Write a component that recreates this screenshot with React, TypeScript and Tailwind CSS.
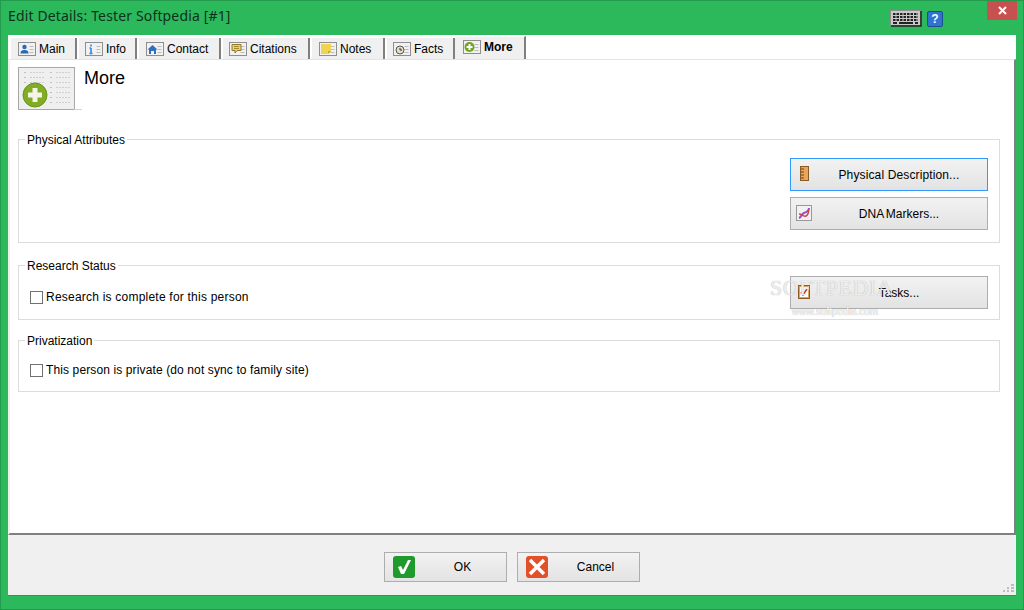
import React from 'react';

function TabGlyph({ children }: { children: React.ReactNode }) {
    return (
        <svg width="18" height="14" viewBox="0 0 18 14" className="shrink-0">
            <rect x="0.5" y="0.5" width="17" height="13" fill="#f1f1f1" stroke="#8f8f8f" />
            <path d="M11.5 4.5h4M11.5 7.5h4M11.5 10.5h4" stroke="#bcbcbc" />
            {children}
        </svg>
    )
}

function Tab({ label, icon, width, active = false }: { label: string, icon: React.ReactNode, width: string, active?: boolean }) {
    if (active) {
        return (
            <div className={'flex flex-row items-center h-[23px] bg-[#f0f0f0] border-t border-[#ffffff] border-r-2 border-r-[#7f7f7f] font-bold text-[#000000] pb-[3px] ' + width}>
                {icon}
                <span className="ml-[3px]">{label}</span>
            </div>
        )
    }
    return (
        <div className={'flex flex-row items-center h-[21px] bg-[#f0f0f0] border-r-2 border-r-[#7f7f7f] ' + width}>
            {icon}
            <span className="ml-[3px]">{label}</span>
        </div>
    )
}

function Group({ title, className, children }: { title: string, className: string, children: React.ReactNode }) {
    return (
        <fieldset className={'border border-[#dcdcdc] pl-[11px] pr-[11px] ' + className}>
            <legend className="-ml-[5px] px-[2px] pt-[2px] text-[12px] leading-[14px]">{title}</legend>
            {children}
        </fieldset>
    )
}

function WideButton({ label, icon, focused = false, labelClass = '' }: { label: string, icon: React.ReactNode, focused?: boolean, labelClass?: string }) {
    return (
        <div className={'relative flex items-center justify-center w-[198px] h-[33px] pl-[20px] border bg-gradient-to-b from-[#f2f2f2] to-[#e3e3e3] ' + (focused ? 'border-[#3399ff]' : 'border-[#adadad]')}>
            <span className="absolute left-[4px] top-[7px] flex w-[18px] justify-center">{icon}</span>
            <span className={labelClass}>{label}</span>
        </div>
    )
}

function CheckRow({ label, labelClass }: { label: string, labelClass: string }) {
    return (
        <div className="flex flex-row items-center">
            <span className="w-[13px] h-[13px] border border-[#707070] bg-white" />
            <span className={'ml-[3px] ' + labelClass}>{label}</span>
        </div>
    )
}

function FooterButton({ label, icon }: { label: string, icon: React.ReactNode }) {
    return (
        <div className="relative flex items-center justify-center w-[123px] h-[30px] pl-[34px] border border-[#adadad] bg-gradient-to-b from-[#f2f2f2] to-[#e3e3e3]">
            <span className="absolute left-[7px] top-[2px]">{icon}</span>
            <span className="text-[12px]">{label}</span>
        </div>
    )
}

export default function App() {
    return (
        <div className="relative flex flex-col w-[1024px] h-[610px] overflow-hidden bg-[#2bb95c] border border-[#239a4c] font-['Liberation_Sans',sans-serif] text-[12px] text-black">
            {/* title bar */}
            <div className="flex flex-row h-[34px] shrink-0">
                <div className="pl-[7px] pt-[6px] font-['Noto_Sans',sans-serif] text-[14px] leading-[18px] tracking-[0.15px] text-[#10301c]">Edit Details: Tester Softpedia [#1]</div>
                <div className="flex flex-row ml-auto">
                    <svg width="32" height="17" viewBox="0 0 32 17" className="mt-[9px]">
                        <rect x="0.5" y="0.5" width="30" height="15" fill="#c9c9c9" stroke="#8f8f8f" />
                        <path d="M31 1v15H1" fill="none" stroke="#222" strokeWidth="1.5" />
                        <path d="M3 4h25M3 7h25M3 10h25" stroke="#222" strokeWidth="2" strokeDasharray="2.5 1" />
                        <path d="M3 13h4M9 13h14M25 13h3" stroke="#222" strokeWidth="2" />
                    </svg>
                    <div className="flex items-center justify-center w-[16px] h-[16px] mt-[10px] ml-[5px] rounded-[2px] bg-[#2f74d0] border border-[#1c4d8f] text-[12px] font-bold leading-none text-white">?</div>
                    <div className="flex items-center justify-center w-[30px] h-[19px] ml-[44px] bg-[#c75050] mr-[6px]">
                        <svg width="9" height="9" viewBox="0 0 9 9"><path d="M1 1l7 7M8 1L1 8" stroke="#fff" strokeWidth="2" /></svg>
                    </div>
                </div>
            </div>

            {/* body */}
            <div className="flex flex-col mx-[7px] h-[561px] shrink-0 bg-[#f0f0f0] border-b border-[#707070]">
                <div className="flex flex-col h-[500px] shrink-0 bg-white">
                    {/* tabs */}
                    <div className="flex flex-row items-end h-[24px] shrink-0 pl-[3px] gap-[2px]">
                        <Tab label="Main" width="w-[66px] pl-[7px]" icon={<TabGlyph><circle cx="6.5" cy="5" r="2.2" fill="#2a6cb3" /><path d="M2.5 11.5c0-3 2-3.5 4-3.5s4 .5 4 3.5z" fill="#2a6cb3" /></TabGlyph>} />
                        <Tab label="Info" width="w-[58px] pl-[6px]" icon={<TabGlyph><path d="M6 2.5v2M6 6v5.5M4.5 11.5h3M4.5 6H6" stroke="#2f8ae0" strokeWidth="1.6" fill="none" /></TabGlyph>} />
                        <Tab label="Contact" width="w-[82px] pl-[7px]" icon={<TabGlyph><path d="M1.5 7.5L6.5 3l5 4.5H10V12H8V9H5v3H3V7.5z" fill="#2f6fc0" /></TabGlyph>} />
                        <Tab label="Citations" width="w-[87px] pl-[6px]" icon={<TabGlyph><path d="M3 2.5h9v6H8L6 11V8.500H3z" fill="#f0d060" stroke="#8f7a30" /><path d="M5 4.500h5M5 6.500h5" stroke="#a58a30" /></TabGlyph>} />
                        <Tab label="Notes" width="w-[73px] pl-[7px]" icon={<TabGlyph><path d="M2 2h10v7l-3 3H2z" fill="#f0d34e" /><path d="M12 9H9v3z" fill="#c9a526" /></TabGlyph>} />
                        <Tab label="Facts" width="w-[68px] pl-[6px]" icon={<TabGlyph><circle cx="7" cy="8" r="4" fill="#e2dcc0" stroke="#555" /><path d="M7 6v2h2" stroke="#333" fill="none" /></TabGlyph>} />
                        <Tab label="More" width="w-[71px] -ml-[2px] pl-[8px]" active icon={<TabGlyph><circle cx="6.500" cy="7" r="5" fill="#6ea51c" /><path d="M6.500 4v6M3.500 7h6" stroke="#fff" strokeWidth="2" /></TabGlyph>} />
                    </div>

                    <div className="flex flex-col grow border-t border-[#e4e4e4] border-l-2 border-l-[#f0f0f0] border-r-2 border-r-[#808080] border-b-2 border-b-[#808080] pl-[8px] pr-[14px]">
                        {/* page heading */}
                        <div className="flex flex-row h-[71px] shrink-0 pt-[7px]">
                            <div className="w-[58px] h-[44px]">
                                <svg width="64" height="44" viewBox="0 0 64 44">
                                    <rect x="0.5" y="0.5" width="56" height="42" fill="#efefef" stroke="#a8a8a8" />
                                    <path d="M56 42.500h8" stroke="#d4d4d4" />
                                    <path d="M6 5.500h2M6 10.500h2M6 15.500h2M32 5.500h2M32 10.500h2M32 15.500h2M32 20.500h2M32 25.500h2M32 30.500h2M32 35.500h2" stroke="#c0c0c0" />
                                    <path d="M12 5.500h14M12 10.500h14M12 15.500h14M38 5.500h15M38 10.500h15M38 15.500h15M38 20.500h15M38 25.500h15M38 30.500h15M38 35.500h15" stroke="#cfcfcf" strokeDasharray="2 1" />
                                    <circle cx="17" cy="28" r="12" fill="#80ad24" stroke="#6b9417" />
                                    <path d="M17 21v14M10 28h14" stroke="#f4f4e8" strokeWidth="5" />
                                </svg>
                            </div>
                            <div className="ml-[8px] mt-[1px] text-[18px] leading-[20px]">More</div>
                        </div>

                        <Group title="Physical Attributes" className="h-[112px] shrink-0">
                            <div className="flex flex-col items-end gap-[6px] pt-[11px]">
                                <WideButton label="Physical Description..." labelClass="tracking-[0.13px]" focused icon={
                                    <svg width="9" height="15" viewBox="0 0 9 15"><rect x="0.5" y="0.5" width="8" height="14" fill="#e8a65c" stroke="#8a5a26" /><path d="M1 3h3M1 6h3M1 9h3M1 12h3" stroke="#6b4316" /></svg>
                                } />
                                <WideButton label="DNA Markers..." labelClass="[word-spacing:-1px]" icon={
                                    <svg width="16" height="16" viewBox="0 0 16 16"><rect x="0.5" y="0.5" width="15" height="15" fill="#f2f2f2" stroke="#999" /><path d="M3 13c3-1 2-4 5-5s5-2 5-5" fill="none" stroke="#9b4fd0" strokeWidth="2" /><path d="M3 9c3 0 4 3 7 2s2-5 3-6" fill="none" stroke="#d04050" strokeWidth="1.5" /></svg>
                                } />
                            </div>
                        </Group>

                        <Group title="Research Status" className="mt-[14px] h-[63px] shrink-0">
                            <div className="flex flex-row items-center justify-between pt-[3px]">
                                <div className="mt-[9px]"><CheckRow label="Research is complete for this person" labelClass="tracking-[0.22px]" /></div>
                                <WideButton label="Tasks..." icon={
                                    <svg width="12" height="15" viewBox="0 0 12 15"><rect x="0.5" y="1.5" width="11" height="13" fill="#d9a55c" stroke="#8a5a26" /><rect x="2" y="3" width="8" height="10" fill="#fff" /><path d="M3 8l2 3 4-6" fill="none" stroke="#cc2f2f" strokeWidth="1.5" /></svg>
                                } />
                            </div>
                        </Group>

                        <Group title="Privatization" className="mt-[12px] h-[60px] shrink-0">
                            <div className="pt-[13px]"><CheckRow label="This person is private (do not sync to family site)" labelClass="tracking-[0.12px]" /></div>
                        </Group>
                    </div>
                </div>

                {/* footer */}
                <div className="relative flex flex-row justify-center gap-[10px] pt-[17px] grow">
                    <FooterButton label="OK" icon={
                        <svg width="24" height="24" viewBox="0 0 24 24"><rect width="22" height="22" x="1" y="1" rx="3" fill="#1f9a2c" /><path d="M6 12l3-1 2 4 5-10h3l-7 14h-3z" fill="#fff" /></svg>
                    } />
                    <FooterButton label="Cancel" icon={
                        <svg width="24" height="24" viewBox="0 0 24 24"><rect width="22" height="22" x="1" y="1" rx="3" fill="#e2502a" /><path d="M5 5l14 14M19 5L5 19" stroke="#fff" strokeWidth="3.5" /></svg>
                    } />
                    <svg width="11" height="9" viewBox="0 0 11 9" className="absolute right-[2px] bottom-[2px]">
                        <path d="M8 0h3v2H8zM4 3h2v2H4zM8 3h3v2H8zM0 6h2v2H0zM4 6h2v2H4zM8 6h3v2H8z" fill="#bdbdbd" />
                    </svg>
                </div>
            </div>

            {/* watermark over the page */}
            <div className="absolute left-[769px] top-[274px] font-['Liberation_Serif',serif] text-[22px] leading-[26px] tracking-[0.5px] text-[#ffffffd0] [text-shadow:0_0_1px_#9a9a9a]">SOFTPEDIA</div>
            <div className="absolute left-[791px] top-[304px] text-[10px] leading-[14px] text-[#ffffff] [text-shadow:0_0_1px_#8f8f8f]">www.softpedia.com</div>
        </div>
    )
}
